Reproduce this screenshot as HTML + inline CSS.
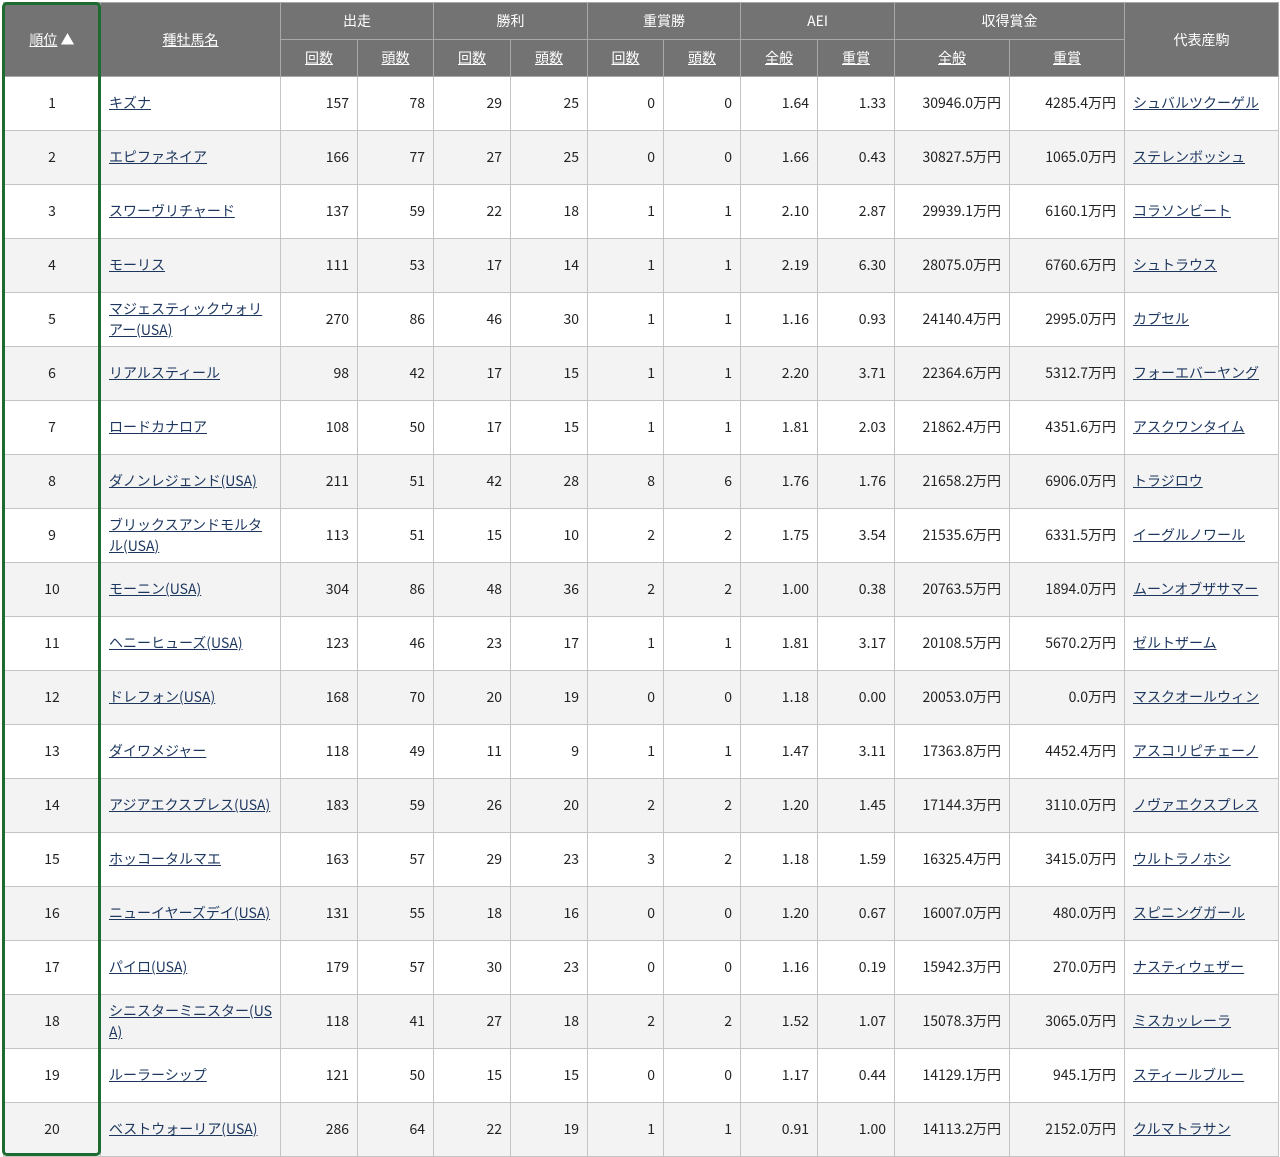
<!DOCTYPE html>
<html><head><meta charset="utf-8"><style>
body{margin:0;background:#fff;font-family:"Noto Sans CJK JP","Liberation Sans",sans-serif;font-size:14px;color:#222;}
.wrap{position:absolute;left:3px;top:2px;width:1275px;}
table{border-collapse:collapse;table-layout:fixed;width:1275px;}
th{background:#737373;color:#fff;font-weight:normal;border:1px solid #a8a8a8;height:36px;padding:0;text-align:center;line-height:18px;}
th u{text-decoration:underline;}
td{border:1px solid #c4c4c4;height:53px;padding:0 8px;text-align:right;line-height:21px;word-break:break-all;}
td.c{text-align:center;}
td.l{text-align:left;}
tr.e td{background:#f3f3f3;}
a{color:#1c365e;text-decoration:underline;}
.g{position:absolute;left:2px;top:2px;width:93px;height:1148px;border:3px solid #1d6b30;border-radius:5px;pointer-events:none;}
</style></head><body>
<div class="wrap">
<table>
<colgroup><col style="width:97px"><col style="width:180px"><col style="width:77px"><col style="width:76px"><col style="width:77px"><col style="width:77px"><col style="width:76px"><col style="width:77px"><col style="width:77px"><col style="width:77px"><col style="width:115px"><col style="width:115px"><col style="width:154px"></colgroup>
<tr><th rowspan="2"><u>順位</u> ▲</th><th rowspan="2"><u>種牡馬名</u></th><th colspan="2">出走</th><th colspan="2">勝利</th><th colspan="2">重賞勝</th><th colspan="2">AEI</th><th colspan="2">収得賞金</th><th rowspan="2">代表産駒</th></tr>
<tr><th><u>回数</u></th><th><u>頭数</u></th><th><u>回数</u></th><th><u>頭数</u></th><th><u>回数</u></th><th><u>頭数</u></th><th><u>全般</u></th><th><u>重賞</u></th><th><u>全般</u></th><th><u>重賞</u></th></tr>
<tr><td class="c">1</td><td class="l"><a>キズナ</a></td><td>157</td><td>78</td><td>29</td><td>25</td><td>0</td><td>0</td><td>1.64</td><td>1.33</td><td>30946.0万円</td><td>4285.4万円</td><td class="l"><a>シュバルツクーゲル</a></td></tr>
<tr class="e"><td class="c">2</td><td class="l"><a>エピファネイア</a></td><td>166</td><td>77</td><td>27</td><td>25</td><td>0</td><td>0</td><td>1.66</td><td>0.43</td><td>30827.5万円</td><td>1065.0万円</td><td class="l"><a>ステレンボッシュ</a></td></tr>
<tr><td class="c">3</td><td class="l"><a>スワーヴリチャード</a></td><td>137</td><td>59</td><td>22</td><td>18</td><td>1</td><td>1</td><td>2.10</td><td>2.87</td><td>29939.1万円</td><td>6160.1万円</td><td class="l"><a>コラソンビート</a></td></tr>
<tr class="e"><td class="c">4</td><td class="l"><a>モーリス</a></td><td>111</td><td>53</td><td>17</td><td>14</td><td>1</td><td>1</td><td>2.19</td><td>6.30</td><td>28075.0万円</td><td>6760.6万円</td><td class="l"><a>シュトラウス</a></td></tr>
<tr><td class="c">5</td><td class="l"><a>マジェスティックウォリ<br>アー(USA)</a></td><td>270</td><td>86</td><td>46</td><td>30</td><td>1</td><td>1</td><td>1.16</td><td>0.93</td><td>24140.4万円</td><td>2995.0万円</td><td class="l"><a>カプセル</a></td></tr>
<tr class="e"><td class="c">6</td><td class="l"><a>リアルスティール</a></td><td>98</td><td>42</td><td>17</td><td>15</td><td>1</td><td>1</td><td>2.20</td><td>3.71</td><td>22364.6万円</td><td>5312.7万円</td><td class="l"><a>フォーエバーヤング</a></td></tr>
<tr><td class="c">7</td><td class="l"><a>ロードカナロア</a></td><td>108</td><td>50</td><td>17</td><td>15</td><td>1</td><td>1</td><td>1.81</td><td>2.03</td><td>21862.4万円</td><td>4351.6万円</td><td class="l"><a>アスクワンタイム</a></td></tr>
<tr class="e"><td class="c">8</td><td class="l"><a>ダノンレジェンド(USA)</a></td><td>211</td><td>51</td><td>42</td><td>28</td><td>8</td><td>6</td><td>1.76</td><td>1.76</td><td>21658.2万円</td><td>6906.0万円</td><td class="l"><a>トラジロウ</a></td></tr>
<tr><td class="c">9</td><td class="l"><a>ブリックスアンドモルタ<br>ル(USA)</a></td><td>113</td><td>51</td><td>15</td><td>10</td><td>2</td><td>2</td><td>1.75</td><td>3.54</td><td>21535.6万円</td><td>6331.5万円</td><td class="l"><a>イーグルノワール</a></td></tr>
<tr class="e"><td class="c">10</td><td class="l"><a>モーニン(USA)</a></td><td>304</td><td>86</td><td>48</td><td>36</td><td>2</td><td>2</td><td>1.00</td><td>0.38</td><td>20763.5万円</td><td>1894.0万円</td><td class="l"><a>ムーンオブザサマー</a></td></tr>
<tr><td class="c">11</td><td class="l"><a>ヘニーヒューズ(USA)</a></td><td>123</td><td>46</td><td>23</td><td>17</td><td>1</td><td>1</td><td>1.81</td><td>3.17</td><td>20108.5万円</td><td>5670.2万円</td><td class="l"><a>ゼルトザーム</a></td></tr>
<tr class="e"><td class="c">12</td><td class="l"><a>ドレフォン(USA)</a></td><td>168</td><td>70</td><td>20</td><td>19</td><td>0</td><td>0</td><td>1.18</td><td>0.00</td><td>20053.0万円</td><td>0.0万円</td><td class="l"><a>マスクオールウィン</a></td></tr>
<tr><td class="c">13</td><td class="l"><a>ダイワメジャー</a></td><td>118</td><td>49</td><td>11</td><td>9</td><td>1</td><td>1</td><td>1.47</td><td>3.11</td><td>17363.8万円</td><td>4452.4万円</td><td class="l"><a>アスコリピチェーノ</a></td></tr>
<tr class="e"><td class="c">14</td><td class="l"><a>アジアエクスプレス(USA)</a></td><td>183</td><td>59</td><td>26</td><td>20</td><td>2</td><td>2</td><td>1.20</td><td>1.45</td><td>17144.3万円</td><td>3110.0万円</td><td class="l"><a>ノヴァエクスプレス</a></td></tr>
<tr><td class="c">15</td><td class="l"><a>ホッコータルマエ</a></td><td>163</td><td>57</td><td>29</td><td>23</td><td>3</td><td>2</td><td>1.18</td><td>1.59</td><td>16325.4万円</td><td>3415.0万円</td><td class="l"><a>ウルトラノホシ</a></td></tr>
<tr class="e"><td class="c">16</td><td class="l"><a>ニューイヤーズデイ(USA)</a></td><td>131</td><td>55</td><td>18</td><td>16</td><td>0</td><td>0</td><td>1.20</td><td>0.67</td><td>16007.0万円</td><td>480.0万円</td><td class="l"><a>スピニングガール</a></td></tr>
<tr><td class="c">17</td><td class="l"><a>パイロ(USA)</a></td><td>179</td><td>57</td><td>30</td><td>23</td><td>0</td><td>0</td><td>1.16</td><td>0.19</td><td>15942.3万円</td><td>270.0万円</td><td class="l"><a>ナスティウェザー</a></td></tr>
<tr class="e"><td class="c">18</td><td class="l"><a>シニスターミニスター(US<br>A)</a></td><td>118</td><td>41</td><td>27</td><td>18</td><td>2</td><td>2</td><td>1.52</td><td>1.07</td><td>15078.3万円</td><td>3065.0万円</td><td class="l"><a>ミスカッレーラ</a></td></tr>
<tr><td class="c">19</td><td class="l"><a>ルーラーシップ</a></td><td>121</td><td>50</td><td>15</td><td>15</td><td>0</td><td>0</td><td>1.17</td><td>0.44</td><td>14129.1万円</td><td>945.1万円</td><td class="l"><a>スティールブルー</a></td></tr>
<tr class="e"><td class="c">20</td><td class="l"><a>ベストウォーリア(USA)</a></td><td>286</td><td>64</td><td>22</td><td>19</td><td>1</td><td>1</td><td>0.91</td><td>1.00</td><td>14113.2万円</td><td>2152.0万円</td><td class="l"><a>クルマトラサン</a></td></tr>
</table>
</div>
<div class="g"></div>
</body></html>
